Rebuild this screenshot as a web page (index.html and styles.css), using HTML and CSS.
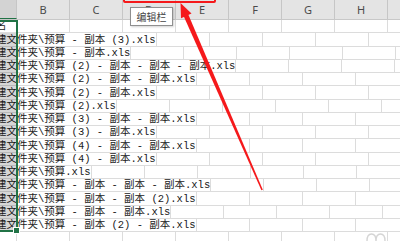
FILE: index.html
```html
<!doctype html>
<html lang=zh-CN>
<head>
	<meta charset=utf-8>
	<title>预算文件列表</title>
	<link rel="stylesheet" href="styles.css">
</head>
<body>
	<div class=sheet>
		<div class=head>
			<div class="hc a"></div>
			<div class=hc>B</div>
			<div class=hc>C</div>
			<div class=hc>D</div>
			<div class=hc>E</div>
			<div class=hc>F</div>
			<div class=hc>G</div>
			<div class=hc>H</div>
			<div class=hc>I</div>
		</div>

		<div class=row><div class="c a"><span class="txt first">文件名</span></div><div class=c></div><div class=c></div><div class=c></div><div class=c></div><div class=c></div><div class=c></div><div class=c></div><div class=c></div></div>
		<div class=row><div class="c a"><span class=txt>建文件夹\预算 - 副本 (3).xls</span></div><div class=c></div><div class=c></div><div class=c></div><div class=c></div><div class=c></div><div class=c></div><div class=c></div><div class=c></div></div>
		<div class=row><div class="c a"><span class=txt>建文件夹\预算 - 副本.xls</span></div><div class=c></div><div class=c></div><div class=c></div><div class=c></div><div class=c></div><div class=c></div><div class=c></div><div class=c></div></div>
		<div class=row><div class="c a"><span class=txt>建文件夹\预算 (2) - 副本 - 副本 - 副本.xls</span></div><div class=c></div><div class=c></div><div class=c></div><div class=c></div><div class=c></div><div class=c></div><div class=c></div><div class=c></div></div>
		<div class=row><div class="c a"><span class=txt>建文件夹\预算 (2) - 副本 - 副本.xls</span></div><div class=c></div><div class=c></div><div class=c></div><div class=c></div><div class=c></div><div class=c></div><div class=c></div><div class=c></div></div>
		<div class=row><div class="c a"><span class=txt>建文件夹\预算 (2) - 副本.xls</span></div><div class=c></div><div class=c></div><div class=c></div><div class=c></div><div class=c></div><div class=c></div><div class=c></div><div class=c></div></div>
		<div class=row><div class="c a"><span class=txt>建文件夹\预算 (2).xls</span></div><div class=c></div><div class=c></div><div class=c></div><div class=c></div><div class=c></div><div class=c></div><div class=c></div><div class=c></div></div>
		<div class=row><div class="c a"><span class=txt>建文件夹\预算 (3) - 副本 - 副本.xls</span></div><div class=c></div><div class=c></div><div class=c></div><div class=c></div><div class=c></div><div class=c></div><div class=c></div><div class=c></div></div>
		<div class=row><div class="c a"><span class=txt>建文件夹\预算 (3) - 副本.xls</span></div><div class=c></div><div class=c></div><div class=c></div><div class=c></div><div class=c></div><div class=c></div><div class=c></div><div class=c></div></div>
		<div class=row><div class="c a"><span class=txt>建文件夹\预算 (4) - 副本 - 副本.xls</span></div><div class=c></div><div class=c></div><div class=c></div><div class=c></div><div class=c></div><div class=c></div><div class=c></div><div class=c></div></div>
		<div class=row><div class="c a"><span class=txt>建文件夹\预算 (4) - 副本.xls</span></div><div class=c></div><div class=c></div><div class=c></div><div class=c></div><div class=c></div><div class=c></div><div class=c></div><div class=c></div></div>
		<div class=row><div class="c a"><span class=txt>建文件夹\预算.xls</span></div><div class=c></div><div class=c></div><div class=c></div><div class=c></div><div class=c></div><div class=c></div><div class=c></div><div class=c></div></div>
		<div class=row><div class="c a"><span class=txt>建文件夹\预算 - 副本 - 副本 - 副本.xls</span></div><div class=c></div><div class=c></div><div class=c></div><div class=c></div><div class=c></div><div class=c></div><div class=c></div><div class=c></div></div>
		<div class=row><div class="c a"><span class=txt>建文件夹\预算 - 副本 - 副本 (2).xls</span></div><div class=c></div><div class=c></div><div class=c></div><div class=c></div><div class=c></div><div class=c></div><div class=c></div><div class=c></div></div>
		<div class=row><div class="c a"><span class=txt>建文件夹\预算 - 副本 - 副本.xls</span></div><div class=c></div><div class=c></div><div class=c></div><div class=c></div><div class=c></div><div class=c></div><div class=c></div><div class=c></div></div>
		<div class=row><div class="c a"><span class=txt>建文件夹\预算 - 副本 (2) - 副本.xls</span></div><div class=c></div><div class=c></div><div class=c></div><div class=c></div><div class=c></div><div class=c></div><div class=c></div><div class=c></div></div>
		<div class=row><div class="c a"></div><div class=c></div><div class=c></div><div class=c></div><div class=c></div><div class=c></div><div class=c></div><div class=c></div><div class=c></div></div>
	</div>

	<!-- selection of column A, active cell on row 1 -->
	<div class=selection><div class=shade></div><div class=handle></div></div>

	<div class=tip>编辑栏</div>
	<div class=mark></div>

	<svg class=arrow width=400 height=241 viewBox="0 0 400 241">
		<polygon points="188.2,14.2 183.6,16 261.4,190.3 262.8,189.7" fill="#f5191b"/>
		<polygon points="180.5,3 191.5,13.5 181,18.2" fill="#f5191b"/>
	</svg>

	<svg class=logo width=20 height=8 viewBox="0 0 20 8">
		<path d="M1 8 Q1 1 5.5 1 Q10 1 10 8 M10 8 Q10 1 14.5 1 Q19 1 19 8" fill=none stroke="#d5d5d5" stroke-width="1.4"/>
	</svg>
</body>
</html>
```

FILE: styles.css
```css
html, body {
	width: 100%;
	height: 100%;
	margin: 0;
	overflow: hidden;
}

body {
	position: relative;
	background: #fff;
	font-family: "Liberation Mono", "Noto Sans CJK SC", monospace;
	color: #1a1a1a;
}

.sheet {
	display: flex;
	flex-direction: column;
	width: max-content;
}

.head {
	display: flex;
	height: 20px;
	box-sizing: border-box;
	background: #e4e4e4;
	border-bottom: 1px solid #c8c8c8;
	font: 11px "Noto Sans", "Liberation Sans", sans-serif;
	color: #4a4a4a;

	.hc {
		flex: 0 0 53px;
		box-sizing: border-box;
		border-right: 1px solid #c6c6c6;
		display: flex;
		align-items: center;
		justify-content: center;
	}

	.hc.a {
		flex-basis: 17px;
		background: #d3d3d3;
		border-bottom: 1px solid #217346;
	}
}

.row {
	display: flex;
	height: 13.27px;
}

.c {
	flex: 0 0 53px;
	box-sizing: border-box;
	border-right: 1px solid #dcdcdc;
	border-bottom: 1px solid #dcdcdc;

	&.a {
		flex-basis: 17px;
		display: flex;
		align-items: flex-end;
		white-space: nowrap;
	}
}

.txt {
	position: relative;
	z-index: 1;
	margin-left: -4px;
	background: #fff;
	font-size: 10.5px;
	line-height: 11px;

	&.first {margin-left: -25px}
}

.selection {
	position: absolute;
	z-index: 2;
	left: -2px;
	top: 20px;
	width: 20px;
	height: 212.3px;
	box-sizing: border-box;
	border: 2px solid #217346;

	.shade {
		margin-top: 11.3px;
		height: calc(100% - 11.3px);
		background: rgba(0, 0, 0, 0.16);
	}

	.handle {
		position: absolute;
		right: -4px;
		bottom: -4px;
		width: 5px;
		height: 5px;
		background: #217346;
		border: 1px solid #fff;
	}
}

.tip {
	position: absolute;
	z-index: 3;
	left: 130px;
	top: 7px;
	width: 43px;
	height: 19px;
	box-sizing: border-box;
	display: flex;
	align-items: center;
	justify-content: center;
	background: #fff;
	border: 1px solid #8f8f8f;
	box-shadow: 1px 1px 2px rgba(0, 0, 0, 0.18);
	font: 10px "Noto Sans CJK SC", sans-serif;
	color: #444;
}

.mark {
	position: absolute;
	z-index: 3;
	left: 123px;
	top: -20px;
	width: 93px;
	height: 23px;
	box-sizing: border-box;
	border: 2px solid #f5191b;
	border-radius: 2px;
}

.arrow {
	position: absolute;
	z-index: 4;
	left: 0;
	top: 0;
}

.logo {
	position: absolute;
	right: 14px;
	bottom: 0;
}
```
